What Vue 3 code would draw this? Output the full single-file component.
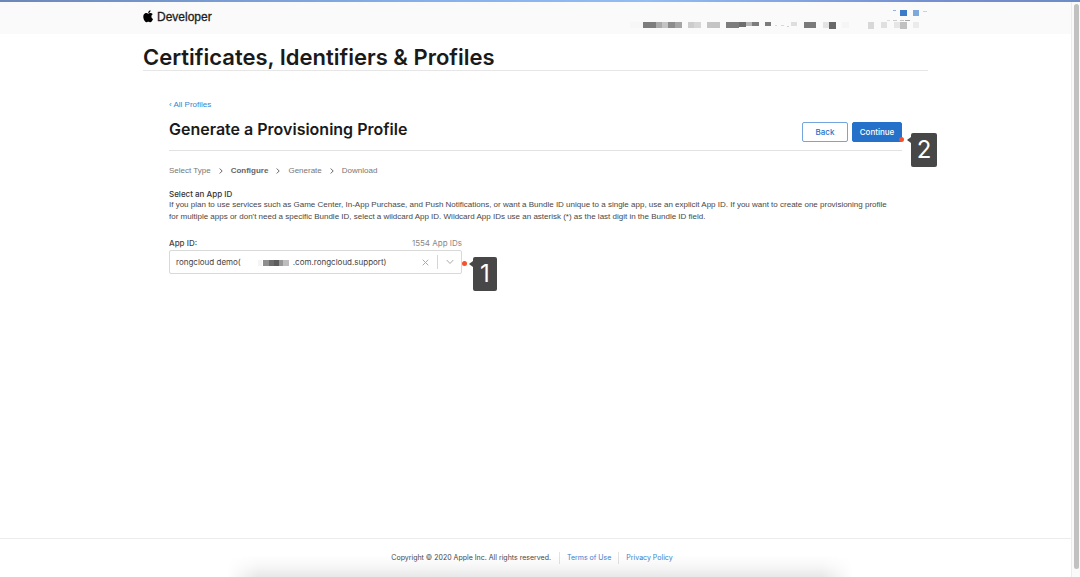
<script setup>
import { ref } from 'vue'

const steps = ['Select Type', 'Configure', 'Generate', 'Download']
const currentStep = 'Configure'

const appIds = ['rongcloud demo(' + '\u2003'.repeat(6) + '\u2002' + '.com.rongcloud.support)']
const selectedAppId = ref(appIds[0])

// x, y, width, height, fill
const accountBlocks = [
  [10, 22, 13, 6, '#f7f7f7'],
  [23, 22, 13, 6, '#7d7d7d'],
  [36, 22, 6, 6, '#aaaaaa'],
  [42, 22, 6, 6, '#c4c4c4'],
  [48, 22, 7, 6, '#8c8c8c'],
  [55, 22, 7, 6, '#a5a5a5'],
  [68, 22, 6, 6, '#cccccc'],
  [74, 22, 7, 6, '#d6d6d6'],
  [87, 22, 13, 6, '#c4c4c4'],
  [106, 22, 13, 6, '#7d7d7d'],
  [119, 22, 7, 5, '#6e6e6e'],
  [126, 22, 6, 4, '#b5b5b5'],
  [132, 22, 7, 4, '#7c7c7c'],
  [145, 22, 6, 4, '#7c7c7c'],
  [155, 25, 2, 1, '#d8d8d8'],
  [161, 25, 3, 1, '#d8d8d8'],
  [167, 26, 2, 1, '#d0d0d0'],
  [171, 22, 6, 4, '#dedede'],
  [184, 22, 12, 6, '#7a7a7a'],
  [203, 22, 6, 6, '#e3e3e3'],
  [209, 22, 7, 7, '#686868'],
  [222, 22, 7, 6, '#f5f5f5'],
  [248, 22, 6, 7, '#d8d8d8'],
  [261, 22, 6, 6, '#e0e0e0'],
  [274, 22, 6, 6, '#e6e6e6'],
  [280, 22, 7, 7, '#c0c0c0'],
  [293, 22, 6, 6, '#ebebeb'],
  [267, 20, 3, 1, '#dddddd'],
  [273, 20, 4, 1, '#cccccc'],
  [280, 20, 4, 1, '#c4c4c4'],
  [285, 20, 5, 1, '#a8a8a8'],
  [273, 10, 3, 1, '#8fb4e0'],
  [280, 10, 7, 6, '#3b7bc8'],
  [293, 10, 6, 6, '#7fa9dc'],
  [303, 11, 4, 1, '#bed3ee']
]

const bundleBlocks = [
  [0, 0, 4, 6, '#f4f4f4'],
  [5, 0, 6, 6, '#8e8e8e'],
  [11, 0, 5, 6, '#6c6c6c'],
  [16, 0, 5, 6, '#5c5c5c'],
  [21, 0, 4, 6, '#969696'],
  [25, 0, 6, 6, '#bdbdbd']
]

function clearAppId() {
  selectedAppId.value = ''
}
</script>

<template>
  <div class="page">
    <header class="top-bar">
      <div class="container top-bar-inner">
        <a class="brand" href="#">
          <svg class="apple" viewBox="4 1.5 16.5 20" aria-hidden="true">
            <path
              d="M16.7 11.6c0-2.3 1.9-3.4 2-3.5-1.1-1.6-2.8-1.8-3.4-1.8-1.4-.2-2.8.8-3.5.8-.7 0-1.8-.8-3-.8-1.5 0-3 .9-3.8 2.300-1.600 2.800-.4 7 1.200 9.300.8 1.100 1.700 2.400 2.900 2.300 1.200 0 1.600-.7 3-.7s1.800.7 3 .7c1.300 0 2.100-1.100 2.800-2.200.9-1.300 1.300-2.500 1.300-2.600 0 0-2.500-1-2.500-3.800zM14.400 4.900c.6-.8 1.100-1.900 1-2.900-.9 0-2.100.6-2.700 1.400-.6.7-1.100 1.800-1 2.800 1 .1 2.100-.5 2.700-1.300z"
            />
          </svg>
          <span>Developer</span>
        </a>
        <svg class="account" viewBox="0 0 308 32" aria-hidden="true">
          <rect
            v-for="(b, i) in accountBlocks"
            :key="i"
            :x="b[0]"
            :y="b[1]"
            :width="b[2]"
            :height="b[3]"
            :fill="b[4]"
          />
        </svg>
      </div>
    </header>

    <main class="container main">
      <h1 class="page-title">Certificates, Identifiers &amp; Profiles</h1>

      <div class="content">
        <a class="back-link" href="#">‹ All Profiles</a>

        <div class="heading-row">
          <h2 class="heading">Generate a Provisioning Profile</h2>
          <div class="actions">
            <button class="btn" type="button">Back</button>
            <div class="marked">
              <button class="btn btn-primary" type="button">Continue</button>
              <span class="dot dot-continue"></span>
              <span class="callout callout-continue">2</span>
            </div>
          </div>
        </div>

        <ol class="steps">
          <li v-for="step in steps" :key="step" class="step" :class="{ active: step === currentStep }">
            <span>{{ step }}</span>
            <svg class="step-arrow" viewBox="0 0 4 6" aria-hidden="true">
              <path d="M.7.5 3.200 3 .7 5.500" />
            </svg>
          </li>
        </ol>

        <h3 class="section-title">Select an App ID</h3>
        <p class="description">
          If you plan to use services such as Game Center, In-App Purchase, and Push Notifications, or want a
          Bundle ID unique to a single app, use an explicit App ID. If you want to create one provisioning
          profile for multiple apps or don't need a specific Bundle ID, select a wildcard App ID. Wildcard App
          IDs use an asterisk (*) as the last digit in the Bundle ID field.
        </p>

        <div class="field">
          <div class="field-head">
            <label for="app-id">App ID:</label>
            <span class="count">1554 App IDs</span>
          </div>
          <div class="select-box">
            <select id="app-id" v-model="selectedAppId" class="select">
              <option v-for="id in appIds" :key="id" :value="id">{{ id }}</option>
            </select>
            <svg v-if="selectedAppId" class="bundle-blocks" viewBox="0 0 31 6" aria-hidden="true">
              <rect
                v-for="(b, i) in bundleBlocks"
                :key="i"
                :x="b[0]"
                :y="b[1]"
                :width="b[2]"
                :height="b[3]"
                :fill="b[4]"
              />
            </svg>
            <div class="indicators">
              <button class="clear" type="button" aria-label="Clear" @click="clearAppId">
                <svg viewBox="0 0 7 7"><path d="M.7.7l5.600 5.600M6.300.7.7 6.300" /></svg>
              </button>
              <span class="separator"></span>
              <svg class="chevron" viewBox="0 0 8 6" aria-hidden="true"><path d="M.7 1 4 4.500 7.300 1" /></svg>
            </div>
            <span class="dot dot-select"></span>
            <span class="callout callout-select">1</span>
          </div>
        </div>
      </div>
    </main>

    <footer class="footer">
      <span class="copyright">Copyright © 2020 Apple Inc. All rights reserved.</span>
      <a class="footer-link" href="#">Terms of Use</a>
      <a class="footer-link" href="#">Privacy Policy</a>
    </footer>

    <div class="bottom-shade"></div>
    <div class="scroll-track"><div class="scroll-thumb"></div></div>
  </div>
</template>

<style>
body {
  margin: 0;
  background: #fff;
}
</style>

<style scoped>
.page {
  position: relative;
  min-height: 100vh;
  box-sizing: border-box;
  padding-right: 9px;
  display: flex;
  flex-direction: column;
  overflow: hidden;
  font-family: Inter, 'Liberation Sans', sans-serif;
  font-size: 8px;
  line-height: 12px;
  color: #484848;
}
.page::before {
  content: '';
  position: absolute;
  z-index: 3;
  top: 0;
  left: 0;
  right: 0;
  height: 2px;
  background: linear-gradient(90deg, #6b87b8, #87b0ea 40%, #93bcf3 60%, #7590cf 85%, #6d8bc4);
}
a {
  color: #3b82d0;
  text-decoration: none;
}
.container {
  width: 100%;
  max-width: 785px;
  margin: 0 auto;
}
.top-bar {
  background: #fafafa;
}
.top-bar-inner {
  display: flex;
  justify-content: space-between;
  height: 34px;
}
.brand {
  display: flex;
  align-items: center;
  gap: 3px;
  height: 34px;
  font-family: 'Liberation Sans', sans-serif;
  font-size: 12px;
  -webkit-text-stroke: 0.3px #1d1d1f;
  color: #1d1d1f;
}
.apple {
  width: 11px;
  height: 13px;
  margin-bottom: 2px;
  fill: #000;
}
.account {
  width: 308px;
  height: 32px;
}
.main {
  flex: 1;
}
.page-title {
  margin: 0;
  padding: 10px 0 0;
  border-bottom: 1px solid #e6e6e6;
  font-size: 22px;
  line-height: 26px;
  font-weight: 600;
  color: #1a1a1a;
}
.content {
  padding: 28px 26px 0;
}
.back-link,
.steps,
.description {
  font-family: 'Liberation Sans', sans-serif;
}
.back-link {
  display: block;
}
.heading-row {
  display: flex;
  justify-content: space-between;
  align-items: flex-end;
  padding: 7px 0 8px;
  border-bottom: 1px solid #e2e2e2;
}
.heading {
  margin: 0;
  padding-bottom: 2px;
  font-size: 16px;
  line-height: 22px;
  font-weight: 600;
  color: #1a1a1a;
}
.actions {
  display: flex;
  gap: 4px;
}
.btn {
  display: block;
  min-width: 46px;
  height: 20px;
  box-sizing: border-box;
  padding: 0 6px;
  border: 1px solid #74a5dc;
  border-radius: 2px;
  background: #fff;
  font-family: inherit;
  font-size: 8px;
  font-weight: 500;
  color: #2a70c8;
  cursor: pointer;
}
.btn-primary {
  min-width: 50px;
  border-color: #2570c8;
  background: #2570c8;
  color: #fff;
}
.marked {
  position: relative;
}
.dot {
  position: absolute;
  width: 5px;
  height: 5px;
  border-radius: 50%;
  background: #f5512b;
}
.callout {
  position: absolute;
  width: 26px;
  height: 34px;
  border-radius: 2px;
  background: #474747;
  font-size: 24px;
  line-height: 34px;
  text-align: center;
  color: #fff;
}
.callout::before {
  content: '';
  position: absolute;
  top: 4px;
  left: -4px;
  border: 3px solid transparent;
  border-left-width: 0;
  border-right: 4px solid #474747;
}
.dot-continue {
  right: -2px;
  bottom: 0;
}
.callout-continue {
  right: -35px;
  top: 11px;
}
.dot-select {
  right: -5px;
  top: 11px;
}
.callout-select {
  right: -35px;
  top: 7px;
  width: 24px;
}
.steps {
  display: flex;
  gap: 8px;
  margin: 0;
  padding: 14px 0 12px;
  list-style: none;
  color: #777;
}
.step {
  display: flex;
  align-items: center;
  gap: 8px;
}
.step.active {
  font-weight: 700;
  color: #666;
}
.step-arrow {
  width: 4px;
  height: 6px;
  fill: none;
  stroke: #666;
}
.step:last-child .step-arrow {
  display: none;
}
.section-title {
  margin: 0;
  font-size: 8px;
  line-height: 10px;
  font-weight: 500;
  color: #333;
}
.description {
  margin: 0;
  padding-right: 6px;
}
.field {
  width: 293px;
  max-width: 100%;
  padding-top: 14px;
}
.field-head {
  display: flex;
  justify-content: space-between;
  margin-bottom: 1px;
  font-weight: 500;
  color: #444;
}
.count {
  font-weight: 400;
  color: #888;
}
.select-box {
  position: relative;
}
.select {
  display: block;
  width: 100%;
  height: 24px;
  box-sizing: border-box;
  padding: 0 50px 0 6px;
  border: 1px solid #d9d9d9;
  border-radius: 2px;
  appearance: none;
  background: #fff;
  font-family: inherit;
  font-size: 8px;
  color: #444;
}
.bundle-blocks {
  position: absolute;
  left: 89px;
  top: 10px;
  width: 31px;
  height: 6px;
}
.indicators {
  position: absolute;
  top: 0;
  right: 8px;
  height: 24px;
  display: flex;
  align-items: center;
  gap: 8px;
}
.indicators svg {
  display: block;
  fill: none;
  stroke: #aaa;
}
.clear {
  width: 7px;
  height: 7px;
  padding: 0;
  border: 0;
  background: none;
  cursor: pointer;
}
.separator {
  width: 1px;
  height: 14px;
  background: #d5d5d5;
}
.chevron {
  width: 8px;
  height: 6px;
  pointer-events: none;
}
.footer {
  display: flex;
  justify-content: center;
  align-items: center;
  height: 38px;
  border-top: 1px solid #ececec;
  font-size: 7px;
}
.copyright {
  padding-right: 8px;
}
.footer-link {
  padding: 0 7px;
  border-left: 1px solid #e3e3e3;
}
.bottom-shade {
  position: absolute;
  left: 21%;
  right: 21%;
  bottom: 0;
  height: 22px;
  background: linear-gradient(rgba(0, 0, 0, 0), rgba(0, 0, 0, 0.03) 50%, rgba(0, 0, 0, 0.09));
  mask-image: linear-gradient(90deg, transparent, #000 5%, #000 95%, transparent);
  pointer-events: none;
}
.scroll-track {
  position: absolute;
  top: 2px;
  right: 0;
  bottom: 0;
  width: 8px;
  border-left: 1px solid #ececec;
  background: #fafafa;
}
.scroll-thumb {
  height: calc(100% - 10px);
  width: 5px;
  margin: 2px 0 0 2px;
  border-radius: 3px;
  background: #c1c1c1;
}
</style>
